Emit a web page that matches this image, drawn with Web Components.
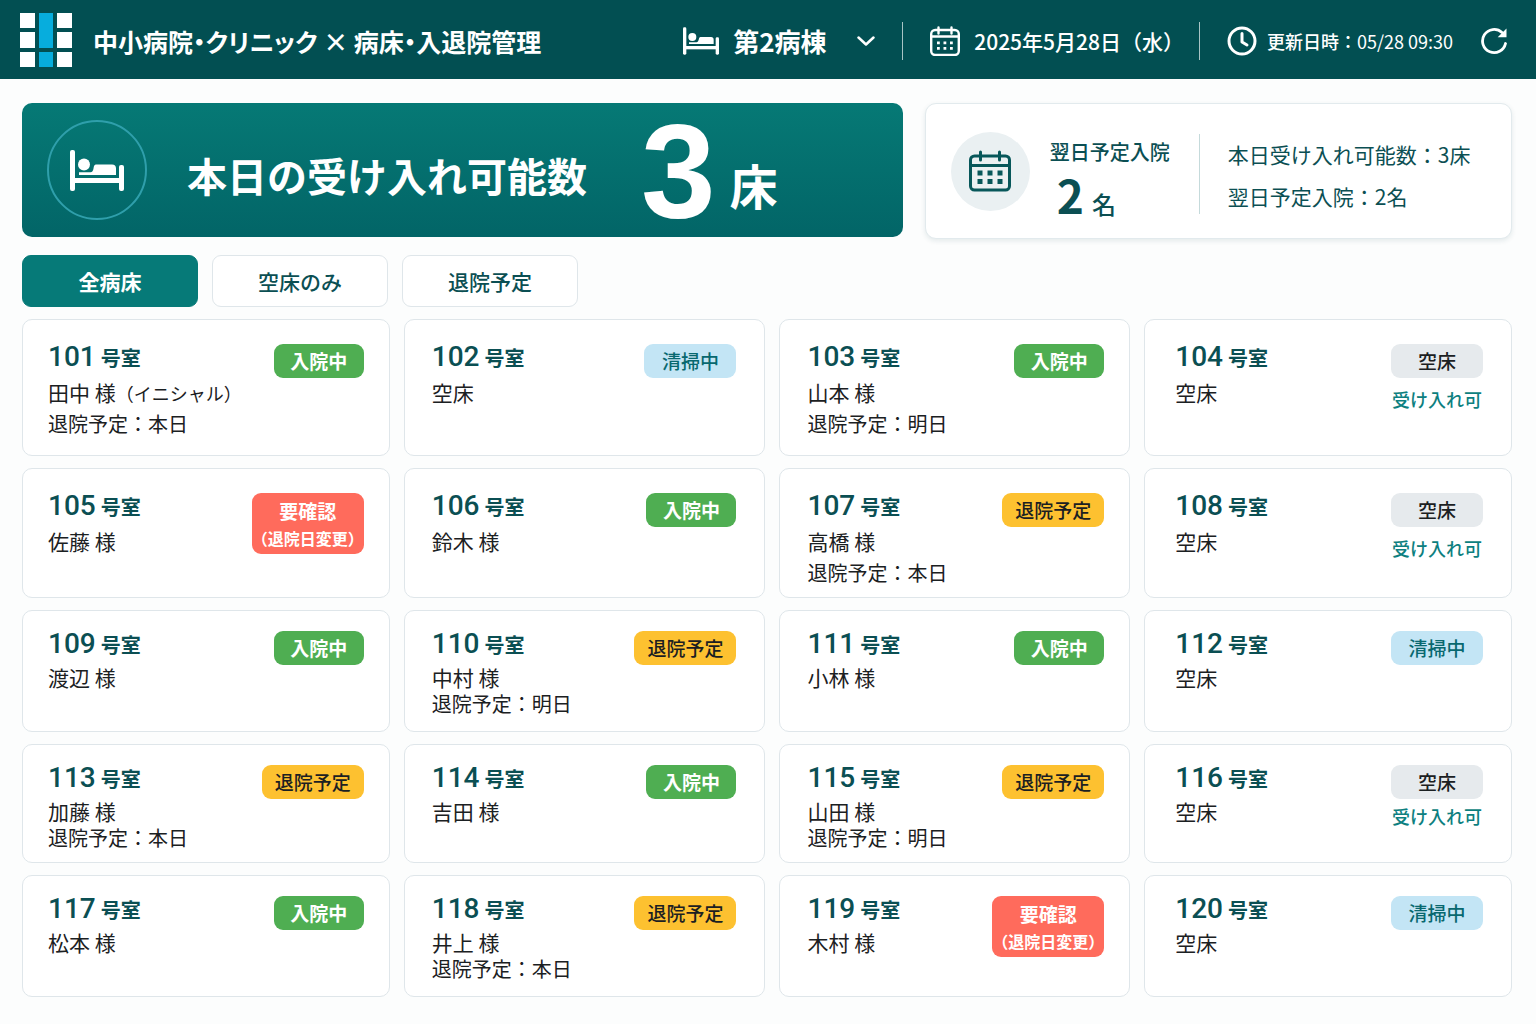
<!DOCTYPE html>
<html lang="ja">
<head>
<meta charset="utf-8">
<meta name="viewport" content="width=device-width, initial-scale=1">
<title>病床・入退院管理</title>
<style>
  :root {
    --header: #024f52;
    --teal: #067a78;
    --ink: #0b4f53;
    --text: #1b2022;
    --line: #dfe6ea;
    --page: #fcfdfd;
  }

  body {
    margin: 0;
    min-height: 100vh;
    display: flex;
    flex-direction: column;
    background: var(--page);
    color: var(--text);
    font-family: "Noto Sans CJK JP", "Noto Sans", sans-serif;
  }

  main {
    flex: 1;
    display: flex;
    flex-direction: column;
    padding: 24px 24px 27px 22px;
  }

  .summary {
    display: grid;
    grid-template-columns: 3fr 2fr;
    align-items: start;
    gap: 22px;
    margin-bottom: 16px;
  }
</style>
</head>
<body>

<app-header>
  <span slot="title">中小病院・クリニック × 病床・入退院管理</span>
  <span slot="date">2025年5月28日（水）</span>
  <span slot="updated">05/28 09:30</span>
</app-header>

<main>
  <section class="summary">
    <capacity-banner>
      本日の受け入れ可能数
      <span slot="count">3</span>
      <span slot="unit">床</span>
    </capacity-banner>
    <admission-card>
      <span slot="label">翌日予定入院</span>
      <span slot="count">2</span>
      <span slot="unit">名</span>
      <span slot="line">本日受け入れ可能数：3床</span>
      <span slot="line">翌日予定入院：2名</span>
    </admission-card>
  </section>

  <bed-filter></bed-filter>

  <bed-board>
    <room-card number="101" status="in">田中 様<small>（イニシャル）</small><span slot="note">退院予定：本日</span></room-card>
    <room-card number="102" status="cleaning">空床</room-card>
    <room-card number="103" status="in">山本 様<span slot="note">退院予定：明日</span></room-card>
    <room-card number="104" status="empty">空床</room-card>

    <room-card number="105" status="check">佐藤 様</room-card>
    <room-card number="106" status="in">鈴木 様</room-card>
    <room-card number="107" status="leaving">高橋 様<span slot="note">退院予定：本日</span></room-card>
    <room-card number="108" status="empty">空床</room-card>

    <room-card compact number="109" status="in">渡辺 様</room-card>
    <room-card compact number="110" status="leaving">中村 様<span slot="note">退院予定：明日</span></room-card>
    <room-card compact number="111" status="in">小林 様</room-card>
    <room-card compact number="112" status="cleaning">空床</room-card>

    <room-card compact number="113" status="leaving">加藤 様<span slot="note">退院予定：本日</span></room-card>
    <room-card compact number="114" status="in">吉田 様</room-card>
    <room-card compact number="115" status="leaving">山田 様<span slot="note">退院予定：明日</span></room-card>
    <room-card compact number="116" status="empty">空床</room-card>

    <room-card compact number="117" status="in">松本 様</room-card>
    <room-card compact number="118" status="leaving">井上 様<span slot="note">退院予定：本日</span></room-card>
    <room-card compact number="119" status="check">木村 様</room-card>
    <room-card compact number="120" status="cleaning">空床</room-card>
  </bed-board>
</main>

<script>
const ICONS = {
  bed: `<svg viewBox="0 0 54 41" fill="currentColor">
    <rect x="0" y="0" width="5" height="41" rx="2"/>
    <rect x="49" y="15" width="5" height="26" rx="2"/>
    <rect x="2" y="28" width="50" height="5"/>
    <circle cx="14" cy="14.500" r="6"/>
    <path d="M26 14.500h16q4 0 4 4v6.500H9v-2.800h11.500q2.500 0 3-3.700.400-4 2.500-4z"/>
  </svg>`,
  calendar: `<svg viewBox="0 0 30 30" fill="none" stroke="currentColor" stroke-width="2.400" stroke-linecap="round">
    <rect x="1.200" y="4" width="27.600" height="25" rx="4"/>
    <path d="M1.500 10.500h27M8.500 1.500v6M21.500 1.500v6"/>
    <path fill="currentColor" stroke="none" d="M7 15.500h2.800v2.800H7zM13.500 15.500h2.800v2.800h-2.800zM20 15.500h2.800v2.800H20zM7 21h2.800v2.800H7zM13.500 21h2.800v2.800h-2.800zM20 21h2.800v2.800H20z"/>
  </svg>`,
  calendarBold: `<svg viewBox="0 0 42 42" fill="none" stroke="currentColor" stroke-width="3" stroke-linecap="round">
    <rect x="1.500" y="6" width="39" height="34" rx="4"/>
    <path d="M2 15.500h38M11.500 2v8M30.500 2v8"/>
    <path fill="currentColor" stroke="none" d="M8.500 20.500h5v5h-5zM18.500 20.500h5v5h-5zM28.500 20.500h5v5h-5zM8.500 29h5v5h-5zM18.500 29h5v5h-5zM28.500 29h5v5h-5z"/>
  </svg>`,
  clock: `<svg viewBox="0 0 30 30" fill="none" stroke="currentColor" stroke-width="3" stroke-linecap="round" stroke-linejoin="round">
    <circle cx="15" cy="15" r="13"/>
    <path d="M15 7.500V16l5 3"/>
  </svg>`,
  chevron: `<svg viewBox="0 0 18 10" fill="none" stroke="currentColor" stroke-width="2.500" stroke-linecap="round" stroke-linejoin="round">
    <path d="M1.500 1.500L9 8.500l7.500-7"/>
  </svg>`,
  refresh: `<svg viewBox="0 0 28 28" fill="none" stroke="currentColor" stroke-width="2.800" stroke-linecap="round">
    <path d="M25.500 16.500A11.600 11.600 0 1 1 22 5.500"/>
    <path fill="currentColor" stroke="none" d="M26.500 1.500v8.800h-8.800z"/>
  </svg>`,
  logo: `<svg viewBox="0 0 52 54">
    <path fill="#fff" d="M0 0h15v15H0zM0 19h15v16H0zM0 39h15v15H0zM37 0h15v15H37zM37 19h15v16H37zM37 39h15v15H37z"/>
    <path fill="#07addd" d="M19 0h14v35H19zM19 39h14v15H19z"/>
  </svg>`,
};

const STATUS = {
  in: { label: "入院中" },
  cleaning: { label: "清掃中" },
  leaving: { label: "退院予定" },
  empty: { label: "空床", hint: "受け入れ可" },
  check: { label: "要確認", sub: "（退院日変更）" },
};

class AppHeader extends HTMLElement {
  constructor() {
    super();
    this.attachShadow({ mode: "open" });
    this.shadowRoot.innerHTML = `
      <style>
        :host {
          display: block;
          background: var(--header);
          color: #fff;
        }
        header {
          display: flex;
          align-items: center;
          justify-content: space-between;
          gap: 24px;
          min-height: 79px;
          padding: 0 28px 0 20px;
          box-sizing: border-box;
          white-space: nowrap;
        }
        svg { display: block; flex: none; }
        .brand, .meta, .item { display: flex; align-items: center; }
        .brand { gap: 21px; }
        .brand svg { width: 52px; height: 54px; }
        h1 {
          margin: 0;
          padding-top: 2px;
          font-size: 25px;
          line-height: 36px;
          font-weight: 700;
          font-feature-settings: "palt";
        }
        .meta { gap: 27px; padding-top: 3px; }
        .item { gap: 14px; }
        .divider { width: 1px; height: 38px; background: #a9c4c5; }
        .ward svg { width: 36px; height: 28px; }
        .picker { display: grid; align-items: center; }
        .picker > * { grid-area: 1 / 1; }
        .picker svg { width: 18px; height: 10px; justify-self: end; pointer-events: none; }
        select {
          appearance: none;
          border: 0;
          margin: 0;
          padding: 0 48px 0 0;
          background: none;
          color: inherit;
          font: 700 26px/36px "Noto Sans CJK JP", sans-serif;
        }
        option { color: #1b2022; }
        .cal svg, .clock svg { width: 30px; height: 30px; }
        .cal { font-size: 21px; font-weight: 500; }
        .clock { gap: 10px; font-size: 18px; }
        .clock b { font-weight: 500; }
        /* the closing bracket already carries half an em of space */
        .cal ::slotted(*) { margin-right: -12px; }
        button {
          border: 0;
          padding: 0;
          background: none;
          color: inherit;
          cursor: pointer;
        }
        button svg { width: 28px; height: 28px; }
      </style>
      <header>
        <div class="brand">${ICONS.logo}<h1><slot name="title"></slot></h1></div>
        <div class="meta">
          <div class="item ward">
            ${ICONS.bed}
            <label class="picker">
              <select aria-label="病棟">
                <option>第1病棟</option>
                <option selected>第2病棟</option>
                <option>第3病棟</option>
              </select>
              ${ICONS.chevron}
            </label>
          </div>
          <i class="divider"></i>
          <div class="item cal">${ICONS.calendar}<slot name="date"></slot></div>
          <i class="divider"></i>
          <div class="item clock">
            ${ICONS.clock}
            <span><b>更新日時：</b><slot name="updated"></slot></span>
          </div>
          <button type="button" aria-label="更新">${ICONS.refresh}</button>
        </div>
      </header>
    `;
  }
}

class CapacityBanner extends HTMLElement {
  constructor() {
    super();
    this.attachShadow({ mode: "open" });
    this.shadowRoot.innerHTML = `
      <style>
        :host {
          display: flex;
          align-items: center;
          padding: 15px 25px;
          border-radius: 10px;
          background: linear-gradient(#067975, #026567);
          color: #fff;
          font-weight: 700;
          white-space: nowrap;
        }
        .ring {
          flex: none;
          display: grid;
          place-items: center;
          width: 100px;
          height: 100px;
          margin-right: 40px;
          box-sizing: border-box;
          border: 2px solid #2f9fab;
          border-radius: 50%;
        }
        svg { width: 54px; height: 41px; }
        h2 { margin: 0; padding-top: 10px; font-size: 40px; line-height: 60px; }
        .count {
          margin: 0 14px 0 54px;
          padding-top: 4px;
          font: 700 134px/100px "Liberation Sans", Arial, sans-serif;
        }
        .unit { padding-top: 28px; font-size: 48px; line-height: 72px; }
      </style>
      <div class="ring">${ICONS.bed}</div>
      <h2><slot></slot></h2>
      <div class="count"><slot name="count"></slot></div>
      <div class="unit"><slot name="unit"></slot></div>
    `;
  }
}

class AdmissionCard extends HTMLElement {
  constructor() {
    super();
    this.attachShadow({ mode: "open" });
    this.shadowRoot.innerHTML = `
      <style>
        :host {
          display: flex;
          align-items: center;
          padding: 18px 25px;
          border: 1px solid #e2eaed;
          border-radius: 11px;
          background: #fff;
          box-shadow: 0 2px 5px rgba(20, 70, 80, 0.1);
          color: var(--ink);
          white-space: nowrap;
        }
        .disc {
          flex: none;
          display: grid;
          place-items: center;
          width: 79px;
          height: 79px;
          margin-right: 20px;
          border-radius: 50%;
          background: #eaf0f2;
          color: #07575a;
        }
        svg { width: 42px; height: 42px; }
        .next { padding-top: 14px; }
        .label { font-size: 20px; line-height: 32px; font-weight: 500; }
        .value {
          display: flex;
          align-items: baseline;
          gap: 8px;
          padding-left: 7px;
          font-size: 24px;
          line-height: 24px;
          font-weight: 500;
        }
        .value b { font-size: 46px; line-height: 52px; }
        .divider { width: 1px; height: 80px; margin: 5px 28px 0 29px; background: #c5dadb; }
        .lines { font-size: 21px; line-height: 42px; padding-top: 8px; }
        .lines ::slotted(*) { display: block; }
      </style>
      <div class="disc">${ICONS.calendarBold}</div>
      <div class="next">
        <div class="label"><slot name="label"></slot></div>
        <div class="value"><b><slot name="count"></slot></b><slot name="unit"></slot></div>
      </div>
      <div class="divider"></div>
      <div class="lines"><slot name="line"></slot></div>
    `;
  }
}

class BedFilter extends HTMLElement {
  constructor() {
    super();
    this.attachShadow({ mode: "open" });
    this.shadowRoot.innerHTML = `
      <style>
        :host { display: flex; gap: 14px; margin-bottom: 12px; }
        button {
          min-width: 176px;
          padding: 11px 24px;
          border: 1px solid var(--line);
          border-radius: 9px;
          background: #fff;
          color: var(--ink);
          font: 500 21px/28px "Noto Sans CJK JP", sans-serif;
          cursor: pointer;
        }
        button[aria-pressed="true"] {
          border-color: var(--teal);
          background: var(--teal);
          color: #fff;
          font-weight: 700;
        }
      </style>
      <button type="button" aria-pressed="true" data-show="in cleaning leaving empty check">全病床</button>
      <button type="button" aria-pressed="false" data-show="empty">空床のみ</button>
      <button type="button" aria-pressed="false" data-show="leaving">退院予定</button>
    `;
  }

  connectedCallback() {
    const buttons = this.shadowRoot.querySelectorAll("button");
    buttons.forEach((button) => {
      button.addEventListener("click", () => {
        buttons.forEach((b) => b.setAttribute("aria-pressed", String(b === button)));
        this.dispatchEvent(new CustomEvent("filter-change", {
          bubbles: true,
          detail: button.dataset.show.split(" "),
        }));
      });
    });
  }
}

class BedBoard extends HTMLElement {
  constructor() {
    super();
    this.attachShadow({ mode: "open" });
    this.shadowRoot.innerHTML = `
      <style>
        :host {
          flex: 1;
          display: grid;
          grid-template-columns: 368fr 362fr 351fr 368fr;
          grid-template-rows: 137fr 130fr 121fr 119fr 122fr;
          gap: 12px 14px;
        }
        ::slotted(:nth-child(4n + 1)) { --pad-start: 25px; }
        ::slotted(:nth-child(4n)) { --pad-start: 30px; }
        ::slotted(:nth-child(even)) { --pad-end: 28px; }
      </style>
      <slot></slot>
    `;
  }

  connectedCallback() {
    document.addEventListener("filter-change", (e) => {
      this.querySelectorAll("room-card").forEach((card) => {
        card.hidden = !e.detail.includes(card.getAttribute("status"));
      });
    });
  }
}

class StatusBadge extends HTMLElement {
  static get observedAttributes() {
    return ["status"];
  }

  constructor() {
    super();
    this.attachShadow({ mode: "open" });
    this.shadowRoot.innerHTML = `
      <style>
        :host {
          display: block;
          min-width: 90px;
          padding: 0 13px;
          box-sizing: border-box;
          border-radius: 9px;
          background: #e6eaed;
          color: var(--text);
          font-size: 19px;
          line-height: 34px;
          font-weight: 500;
          text-align: center;
          white-space: nowrap;
        }
        :host([status="in"]) { background: #4fae52; color: #fff; font-weight: 700; }
        :host([status="empty"]) { min-width: 92px; }
        :host([status="cleaning"]) { min-width: 92px; background: #c3e5f5; color: #08686f; }
        :host([status="leaving"]) { background: #fdc130; }
        :host([status="check"]) {
          padding: 3px 0;
          background: #ff6b5c;
          color: #fff;
          font-weight: 700;
          line-height: 30px;
        }
        small { display: block; font-size: 16px; line-height: 25px; }
        small:empty { display: none; }
      </style>
      <span></span><small></small>
    `;
  }

  attributeChangedCallback() {
    const status = STATUS[this.getAttribute("status")] || {};
    this.shadowRoot.querySelector("span").textContent = status.label || "";
    this.shadowRoot.querySelector("small").textContent = status.sub || "";
  }
}

class RoomCard extends HTMLElement {
  static get observedAttributes() {
    return ["number", "status"];
  }

  constructor() {
    super();
    this.attachShadow({ mode: "open" });
    this.shadowRoot.innerHTML = `
      <style>
        :host {
          --name-line: 32px;
          --note-line: 32px;
          display: flex;
          justify-content: space-between;
          align-items: flex-start;
          padding: 20px var(--pad-end, 25px) 4px var(--pad-start, 27px);
          border: 1px solid var(--line);
          border-radius: 10px;
          background: #fff;
          white-space: nowrap;
        }
        :host([compact]) {
          --name-line: 28px;
          --note-line: 25px;
          padding-top: 16px;
        }
        :host([hidden]) { display: none; }
        h3 {
          margin: 0;
          color: var(--ink);
          font-size: 20px;
          line-height: 36px;
          font-weight: 700;
        }
        h3 b { margin-right: 5px; font: 500 28px/28px Roboto, "Noto Sans", sans-serif; }
        .name { font-size: 21px; line-height: var(--name-line); }
        .name ::slotted(small) { font-size: 18px; line-height: 1; }
        .note { font-size: 20px; line-height: var(--note-line); }
        .state {
          display: flex;
          flex-direction: column;
          align-items: center;
          padding-top: 4px;
        }
        .hint {
          padding-top: 8px;
          color: #0d7f80;
          font-size: 18px;
          line-height: 26px;
          font-weight: 500;
        }
        :host([compact]) .hint { padding-top: 4px; }
        .hint:empty { display: none; }
      </style>
      <div>
        <h3><b></b>号室</h3>
        <div class="name"><slot></slot></div>
        <div class="note"><slot name="note"></slot></div>
      </div>
      <div class="state">
        <status-badge></status-badge>
        <div class="hint"></div>
      </div>
    `;
  }

  connectedCallback() {
    this.update();
  }

  attributeChangedCallback() {
    this.update();
  }

  update() {
    const status = this.getAttribute("status") || "";
    this.shadowRoot.querySelector("b").textContent = this.getAttribute("number") || "";
    this.shadowRoot.querySelector("status-badge").setAttribute("status", status);
    this.shadowRoot.querySelector(".hint").textContent = (STATUS[status] || {}).hint || "";
  }
}

customElements.define("app-header", AppHeader);
customElements.define("capacity-banner", CapacityBanner);
customElements.define("admission-card", AdmissionCard);
customElements.define("bed-filter", BedFilter);
customElements.define("bed-board", BedBoard);
customElements.define("status-badge", StatusBadge);
customElements.define("room-card", RoomCard);
</script>
</body>
</html>
